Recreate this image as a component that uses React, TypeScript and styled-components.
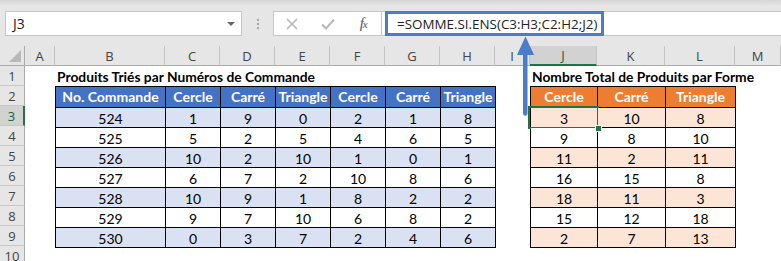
import React from "react";
import styled, { createGlobalStyle } from "styled-components";

const CELL_FONT = `Lato, "Liberation Sans", sans-serif`;
const UI_FONT = `"Open Sans", "Noto Sans", sans-serif`;
const GREEN = "#217346";
const ARROW = "#4a7cc9";

const GlobalStyle = createGlobalStyle`
  html, body { margin: 0; padding: 0; background: #fff; overflow: hidden; }
`;

const Page = styled.div`
  position: relative;
  width: 781px;
  height: 261px;
  overflow: hidden;
  background: #fff;
`;

/* ---------- barre de formule ---------- */

const Toolbar = styled.div`
  display: flex;
  align-items: stretch;
  height: 46px;
  box-sizing: border-box;
  padding: 11px 0 10px 5px;
  background: linear-gradient(#d6d6d6 0, #e6e6e6 6px, #e6e6e6 100%);
`;

const NameBox = styled.div`
  display: flex;
  align-items: center;
  justify-content: space-between;
  width: 237px;
  box-sizing: border-box;
  padding: 0 6px 0 7px;
  background: #fff;
  border: 1px solid #c6c6c6;
  font: 14px ${UI_FONT};
  color: #222;
`;

const DropArrow = styled.span`
  width: 0;
  height: 0;
  border-left: 4px solid transparent;
  border-right: 4px solid transparent;
  border-top: 4px solid #666;
`;

const Grip = styled.div`
  width: 31px;
  display: flex;
  flex-direction: column;
  align-items: center;
  justify-content: center;
  gap: 2px;

  span {
    width: 2px;
    height: 2px;
    background: #a6a6a6;
  }
`;

const FxButtons = styled.div`
  display: flex;
  align-items: center;
  width: 109px;
  box-sizing: border-box;
  background: #fff;
  border: 1px solid #c6c6c6;
`;

const FxSlot = styled.span`
  width: 36px;
  display: flex;
  align-items: center;
  justify-content: center;
`;

const FxLabel = styled.span`
  font: italic 15px "Liberation Serif", serif;
  color: #555;
  letter-spacing: -1px;

  sub {
    font-size: 11px;
    vertical-align: 0;
  }
`;

const FormulaBar = styled.div`
  flex: 1;
  display: flex;
  box-sizing: border-box;
  padding-left: 3px;
  background: #fff;
  border-top: 1px solid #c6c6c6;
  border-bottom: 1px solid #c6c6c6;
`;

const FormulaHighlight = styled.div`
  display: flex;
  align-items: center;
  width: 219px;
  margin: -1px 0;
  box-sizing: border-box;
  padding-left: 9px;
  border: 3px solid ${ARROW};
  font: 13.4px ${UI_FONT};
  color: #222;
  white-space: nowrap;
`;

/* ---------- feuille ---------- */

const Sheet = styled.div`
  display: grid;
  grid-template-columns: 25px 30px 110px repeat(6, 55px) 35px 67px 68px 70px 1fr;
  grid-template-rows: repeat(11, 20px);
`;

const Corner = styled.div`
  position: relative;
  grid-column: 1;
  grid-row: 1;
  background: #e6e6e6;
  border-right: 1px solid #ababab;
  border-bottom: 1px solid #ababab;

  &::after {
    content: "";
    position: absolute;
    right: 3px;
    bottom: 3px;
    width: 0;
    height: 0;
    border-left: 12px solid transparent;
    border-bottom: 12px solid #b8b8b8;
  }
`;

const ColHead = styled.div<{ $active?: boolean }>`
  grid-row: 1;
  display: flex;
  align-items: center;
  justify-content: center;
  box-sizing: border-box;
  background: ${({ $active }) => ($active ? "#d2d2d2" : "#e6e6e6")};
  border-right: 1px solid #c4c4c4;
  border-bottom: ${({ $active }) => ($active ? `2px solid ${GREEN}` : "1px solid #ababab")};
  font: 13px ${UI_FONT};
  color: ${({ $active }) => ($active ? "#1b5e3a" : "#444")};
`;

const RowHead = styled.div<{ $row: number; $active?: boolean }>`
  grid-column: 1;
  grid-row: ${({ $row }) => $row + 1};
  display: flex;
  align-items: center;
  justify-content: center;
  box-sizing: border-box;
  background: ${({ $active }) => ($active ? "#d2d2d2" : "#e6e6e6")};
  border-right: ${({ $active }) => ($active ? `2px solid ${GREEN}` : "1px solid #ababab")};
  border-bottom: 1px solid #c8c8c8;
  font: 13px ${UI_FONT};
  color: ${({ $active }) => ($active ? "#1b5e3a" : "#444")};
`;

const Title = styled.div<{ $col: string }>`
  grid-row: 2;
  grid-column: ${({ $col }) => $col};
  align-self: end;
  padding: 0 0 1px 2px;
  font: bold 13.8px ${CELL_FONT};
  color: #000;
  white-space: nowrap;
`;

const TableArea = styled.div<{ $col: string }>`
  grid-row: 3 / 11;
  grid-column: ${({ $col }) => $col};
`;

const Table = styled.table`
  width: 100%;
  border-collapse: collapse;
  table-layout: fixed;
  font: 14px ${CELL_FONT};
  color: #000;

  tr {
    height: 20px;
  }
`;

const Th = styled.th<{ $bg: string }>`
  height: 20px;
  padding: 0;
  border: 1px solid #000;
  background: ${({ $bg }) => $bg};
  color: #fff;
  font-weight: bold;
  text-align: center;
  white-space: nowrap;
  overflow: hidden;
  line-height: 18px;
`;

const Td = styled.td<{ $bg: string; $selected?: boolean }>`
  position: relative;
  height: 20px;
  padding: 1px 0 0;
  box-sizing: border-box;
  border: 1px solid #000;
  background: ${({ $bg }) => $bg};
  text-align: center;
  line-height: 17px;

  ${({ $selected }) =>
    $selected &&
    `
    &::after {
      content: "";
      position: absolute;
      left: -3px;
      top: -2px;
      right: -2px;
      bottom: -2px;
      border: 2px solid ${GREEN};
    }
    &::before {
      content: "";
      position: absolute;
      right: -5px;
      bottom: -5px;
      width: 5px;
      height: 5px;
      background: ${GREEN};
      border: 1px solid #fff;
      z-index: 1;
    }
  `}
`;

const Arrow = styled.svg`
  position: absolute;
  left: 516px;
  top: 36px;
`;

const COLUMNS = ["A", "B", "C", "D", "E", "F", "G", "H", "I", "J", "K", "L", "M"];

const ORDERS = [
  [524, 1, 9, 0, 2, 1, 8],
  [525, 5, 2, 5, 4, 6, 5],
  [526, 10, 2, 10, 1, 0, 1],
  [527, 6, 7, 2, 10, 8, 6],
  [528, 10, 9, 1, 8, 2, 2],
  [529, 9, 7, 10, 6, 8, 2],
  [530, 0, 3, 7, 2, 4, 6],
];

const TOTALS = [
  [3, 10, 8],
  [9, 8, 10],
  [11, 2, 11],
  [16, 15, 8],
  [18, 11, 3],
  [15, 12, 18],
  [2, 7, 13],
];

const BLUE_HEAD = "#4472c4";
const BLUE_BAND = "#d9e1f2";
const ORANGE_HEAD = "#ed7d31";
const ORANGE_BAND = "#fce4d6";

export default function App() {
  return (
    <Page>
      <GlobalStyle />
      <Toolbar>
        <NameBox>
          J3
          <DropArrow />
        </NameBox>
        <Grip>
          <span />
          <span />
          <span />
        </Grip>
        <FxButtons>
          <FxSlot>
            <svg width="12" height="12" viewBox="0 0 12 12">
              <path d="M1 1L11 11M11 1L1 11" stroke="#b8b8b8" strokeWidth="1.6" fill="none" />
            </svg>
          </FxSlot>
          <FxSlot>
            <svg width="14" height="12" viewBox="0 0 14 12">
              <path d="M1 6.5L5 10.5L13 1.5" stroke="#b8b8b8" strokeWidth="2" fill="none" />
            </svg>
          </FxSlot>
          <FxSlot>
            <FxLabel>
              f<sub>x</sub>
            </FxLabel>
          </FxSlot>
        </FxButtons>
        <FormulaBar>
          <FormulaHighlight>=SOMME.SI.ENS(C3:H3;C2:H2;J2)</FormulaHighlight>
        </FormulaBar>
      </Toolbar>

      <Sheet>
        <Corner />
        {COLUMNS.map((c, i) => (
          <ColHead key={c} $active={c === "J"} style={{ gridColumn: i + 2 }}>
            {c}
          </ColHead>
        ))}
        {Array.from({ length: 10 }, (_, i) => (
          <RowHead key={i} $row={i + 1} $active={i + 1 === 3}>
            {i + 1}
          </RowHead>
        ))}

        <Title $col="3 / 10">Produits Triés par Numéros de Commande</Title>
        <Title $col="11 / 14">Nombre Total de Produits par Forme</Title>

        <TableArea $col="3 / 10">
          <Table>
            <colgroup>
              <col style={{ width: 110 }} />
              {Array.from({ length: 6 }, (_, i) => (
                <col key={i} style={{ width: 55 }} />
              ))}
            </colgroup>
            <thead>
              <tr>
                {["No. Commande", "Cercle", "Carré", "Triangle", "Cercle", "Carré", "Triangle"].map((h, i) => (
                  <Th key={i} $bg={BLUE_HEAD}>
                    {h}
                  </Th>
                ))}
              </tr>
            </thead>
            <tbody>
              {ORDERS.map((row, r) => (
                <tr key={r}>
                  {row.map((v, i) => (
                    <Td key={i} $bg={r % 2 === 0 ? BLUE_BAND : "#fff"}>
                      {v}
                    </Td>
                  ))}
                </tr>
              ))}
            </tbody>
          </Table>
        </TableArea>

        <TableArea $col="11 / 14">
          <Table>
            <colgroup>
              <col style={{ width: 67 }} />
              <col style={{ width: 68 }} />
              <col style={{ width: 70 }} />
            </colgroup>
            <thead>
              <tr>
                {["Cercle", "Carré", "Triangle"].map((h) => (
                  <Th key={h} $bg={ORANGE_HEAD}>
                    {h}
                  </Th>
                ))}
              </tr>
            </thead>
            <tbody>
              {TOTALS.map((row, r) => (
                <tr key={r}>
                  {row.map((v, i) => (
                    <Td key={i} $bg={r % 2 === 0 ? ORANGE_BAND : "#fff"} $selected={r === 0 && i === 0}>
                      {v}
                    </Td>
                  ))}
                </tr>
              ))}
            </tbody>
          </Table>
        </TableArea>
      </Sheet>

      <Arrow width="19" height="82" viewBox="0 0 19 82">
        <polygon points="9.5,0.5 1,19 18,19" fill={ARROW} />
        <path d="M7 18H11.5V77.5a2.25 2.25 0 0 1 -4.5 0Z" fill={ARROW} />
      </Arrow>
    </Page>
  );
}
